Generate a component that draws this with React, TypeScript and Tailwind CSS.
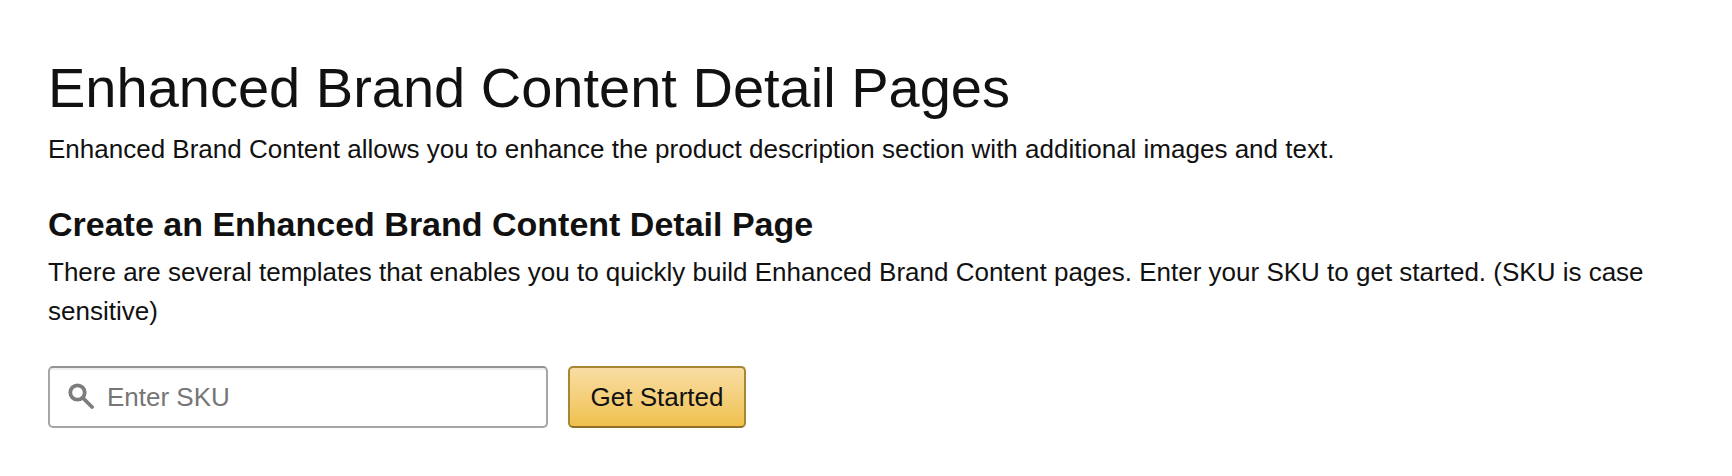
export default function App() {
  return (
    <div className="min-h-[476px] w-full bg-white pl-[48px] pr-[48px] pt-[56px] font-['Liberation_Sans',Arial,sans-serif] text-[#111]">
      <h1 className="m-0 text-[56px] font-normal leading-[64px]">Enhanced Brand Content Detail Pages</h1>
      <p className="mt-[11px] text-[26px] leading-[36px] text-[#111]">
        Enhanced Brand Content allows you to enhance the product description section with additional images and text.
      </p>
      <h2 className="mt-[35px] text-[34px] font-bold leading-[44px]">Create an Enhanced Brand Content Detail Page</h2>
      <p className="mt-[7px] text-[26px] leading-[39px]">
        There are several templates that enables you to quickly build Enhanced Brand Content pages. Enter your SKU to get started. (SKU is case sensitive)
      </p>
      <div className="mt-[35px] flex items-stretch gap-[20px]">
        <div className="flex h-[62px] w-[500px] items-center gap-[13px] rounded-[5px] border-2 border-[#a6a6a6] border-t-[#949494] bg-white pl-[18px] shadow-[inset_0_2px_0_#eeeeee]">
          <svg width="26" height="26" viewBox="0 0 26 26" fill="none" stroke="#7d7d7d" strokeWidth="3.8" className="-mt-[2px] shrink-0">
            <circle cx="9.5" cy="9.5" r="7.2" />
            <path d="M15 15 L24 24" strokeLinecap="round" />
          </svg>
          <input
            placeholder="Enter SKU"
            className="w-full bg-transparent text-[26px] outline-none placeholder:text-[#767676]"
          />
        </div>
        <button className="h-[62px] w-[178px] rounded-[5px] border-2 border-[#a88734] border-b-[#8f7128] bg-gradient-to-b from-[#f8dda3] to-[#f0c14b] text-[26px] text-[#111]">
          Get Started
        </button>
      </div>
    </div>
  );
}
